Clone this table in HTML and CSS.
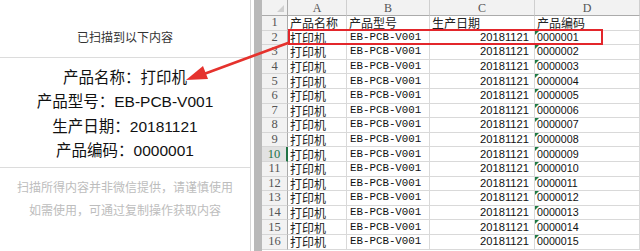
FILE: index.html
```html
<!DOCTYPE html>
<html lang="zh-CN">
<head>
<meta charset="utf-8">
<link rel="stylesheet" href="styles.css">
</head>
<body>
<div class="page">
  <section class="scan">
    <div class="scan-title">已扫描到以下内容</div>
    <div class="scan-box">
      <div>产品名称：打印机</div>
      <div>产品型号：EB-PCB-V001</div>
      <div>生产日期：20181121</div>
      <div>产品编码：0000001</div>
    </div>
    <div class="scan-note">
      <div>扫描所得内容并非微信提供，请谨慎使用</div>
      <div>如需使用，可通过复制操作获取内容</div>
    </div>
  </section>
  <div class="gap"></div>
  <div class="frame"></div>
  <section class="sheet">
    <div class="hd corner"><span class="tri"></span></div>
    <div class="hd col">A</div><div class="hd col">B</div><div class="hd col">C</div><div class="hd col">D</div>

    <div class="rh">1</div><div class="c cj">产品名称</div><div class="c cj">产品型号</div><div class="c cj">生产日期</div><div class="c cj">产品编码</div>
    <div class="rh">2</div><div class="c cj">打印机</div><div class="c mono">EB-PCB-V001</div><div class="c num">20181121</div><div class="c txt">0000001</div>
    <div class="rh">3</div><div class="c cj">打印机</div><div class="c mono">EB-PCB-V001</div><div class="c num">20181121</div><div class="c txt">0000002</div>
    <div class="rh">4</div><div class="c cj">打印机</div><div class="c mono">EB-PCB-V001</div><div class="c num">20181121</div><div class="c txt">0000003</div>
    <div class="rh">5</div><div class="c cj">打印机</div><div class="c mono">EB-PCB-V001</div><div class="c num">20181121</div><div class="c txt">0000004</div>
    <div class="rh">6</div><div class="c cj">打印机</div><div class="c mono">EB-PCB-V001</div><div class="c num">20181121</div><div class="c txt">0000005</div>
    <div class="rh">7</div><div class="c cj">打印机</div><div class="c mono">EB-PCB-V001</div><div class="c num">20181121</div><div class="c txt">0000006</div>
    <div class="rh">8</div><div class="c cj">打印机</div><div class="c mono">EB-PCB-V001</div><div class="c num">20181121</div><div class="c txt">0000007</div>
    <div class="rh">9</div><div class="c cj">打印机</div><div class="c mono">EB-PCB-V001</div><div class="c num">20181121</div><div class="c txt">0000008</div>
    <div class="rh active">10</div><div class="c cj">打印机</div><div class="c mono">EB-PCB-V001</div><div class="c num">20181121</div><div class="c txt">0000009</div>
    <div class="rh">11</div><div class="c cj">打印机</div><div class="c mono">EB-PCB-V001</div><div class="c num">20181121</div><div class="c txt">0000010</div>
    <div class="rh">12</div><div class="c cj">打印机</div><div class="c mono">EB-PCB-V001</div><div class="c num">20181121</div><div class="c txt">0000011</div>
    <div class="rh">13</div><div class="c cj">打印机</div><div class="c mono">EB-PCB-V001</div><div class="c num">20181121</div><div class="c txt">0000012</div>
    <div class="rh">14</div><div class="c cj">打印机</div><div class="c mono">EB-PCB-V001</div><div class="c num">20181121</div><div class="c txt">0000013</div>
    <div class="rh">15</div><div class="c cj">打印机</div><div class="c mono">EB-PCB-V001</div><div class="c num">20181121</div><div class="c txt">0000014</div>
    <div class="rh">16</div><div class="c cj">打印机</div><div class="c mono">EB-PCB-V001</div><div class="c num">20181121</div><div class="c txt">0000015</div>
  </section>
  <div class="highlight"></div>
  <svg class="arrow" width="640" height="251" viewBox="0 0 640 251">
    <line x1="288" y1="43" x2="204" y2="74" stroke="#e5322d" stroke-width="2.6" stroke-linecap="round"/>
    <polygon points="186,80 208,79 203,66" fill="#e5322d"/>
  </svg>
</div>
</body>
</html>
```
FILE: styles.css
```css
* { box-sizing: border-box; }
html, body { margin: 0; padding: 0; background: #fff; }
.page {
  position: relative;
  width: 640px;
  height: 251px;
  overflow: hidden;
  display: flex;
}
.scan {
  width: 251px;
  flex: none;
  border-right: 1px solid #d6d6d6;
  font-family: "Liberation Sans", "Noto Sans CJK SC", sans-serif;
  text-align: center;
  padding-top: 28px;
}
.scan-title {
  font-size: 12px;
  line-height: 20px;
  color: #333;
  margin-bottom: 9px;
}
.scan-box {
  border-top: 1px solid #dcdcdc;
  border-bottom: 1px solid #dcdcdc;
  padding: 8px 0 4px;
  font-size: 15.5px;
  line-height: 24.3px;
  color: #111;
}
.scan-note {
  margin-top: 9px;
  font-size: 12px;
  line-height: 23px;
  color: #bdbdbd;
}
.gap { width: 3px; flex: none; }
.frame { width: 8px; flex: none; background: #b9b9b9; }
.sheet {
  flex: 1;
  display: grid;
  grid-template-columns: 26px 59px 83px 105px 1fr;
  grid-template-rows: 16px repeat(16, 14.6px);
  align-content: start;
  background: #fff;
}
.hd {
  background: #f2f2f2;
  border-right: 1px solid #cfcfcf;
  border-bottom: 1px solid #ababab;
  font-family: "Liberation Serif", serif;
  font-size: 12px;
  line-height: 14px;
  color: #555;
  display: flex;
  align-items: center;
  justify-content: center;
}
.corner { position: relative; border-right-color: #ababab; }
.tri {
  position: absolute;
  right: 3px;
  bottom: 3px;
  width: 0;
  height: 0;
  border-left: 7px solid transparent;
  border-bottom: 7px solid #cfcfcf;
}
.rh {
  background: #f2f2f2;
  border-right: 1px solid #ababab;
  border-bottom: 1px solid #d6d6d6;
  font-family: "Liberation Serif", serif;
  font-size: 12.5px;
  line-height: 13px;
  color: #555;
  display: flex;
  align-items: center;
  justify-content: center;
}
.rh.active {
  background: #e2e2e2;
  color: #217346;
  border-right: 2px solid #217346;
}
.c {
  border-right: 1px solid #d9d9d9;
  border-bottom: 1px solid #d9d9d9;
  display: flex;
  align-items: center;
  white-space: nowrap;
  line-height: 13px;
  color: #111;
  position: relative;
  min-width: 0;
}
.cj {
  font-family: "Noto Sans CJK SC", sans-serif;
  font-size: 12px;
  font-weight: 400;
  padding-left: 2px;
  color: #222;
}
.mono {
  font-family: "Liberation Mono", monospace;
  font-size: 10.8px;
  padding-left: 3px;
}
.num {
  font-family: "Liberation Sans", sans-serif;
  font-size: 11.2px;
  justify-content: flex-end;
  padding-right: 5px;
}
.txt {
  font-family: "Liberation Sans", sans-serif;
  font-size: 10.7px;
  padding-left: 2px;
}
.txt::before {
  content: "";
  position: absolute;
  left: 0;
  top: 0;
  width: 0;
  height: 0;
  border-top: 4px solid #1f7a43;
  border-right: 4px solid transparent;
}
.highlight {
  position: absolute;
  left: 288px;
  top: 29px;
  width: 315px;
  height: 16px;
  border: 2px solid #e3262b;
}
.arrow {
  position: absolute;
  left: 0;
  top: 0;
  pointer-events: none;
}
```
